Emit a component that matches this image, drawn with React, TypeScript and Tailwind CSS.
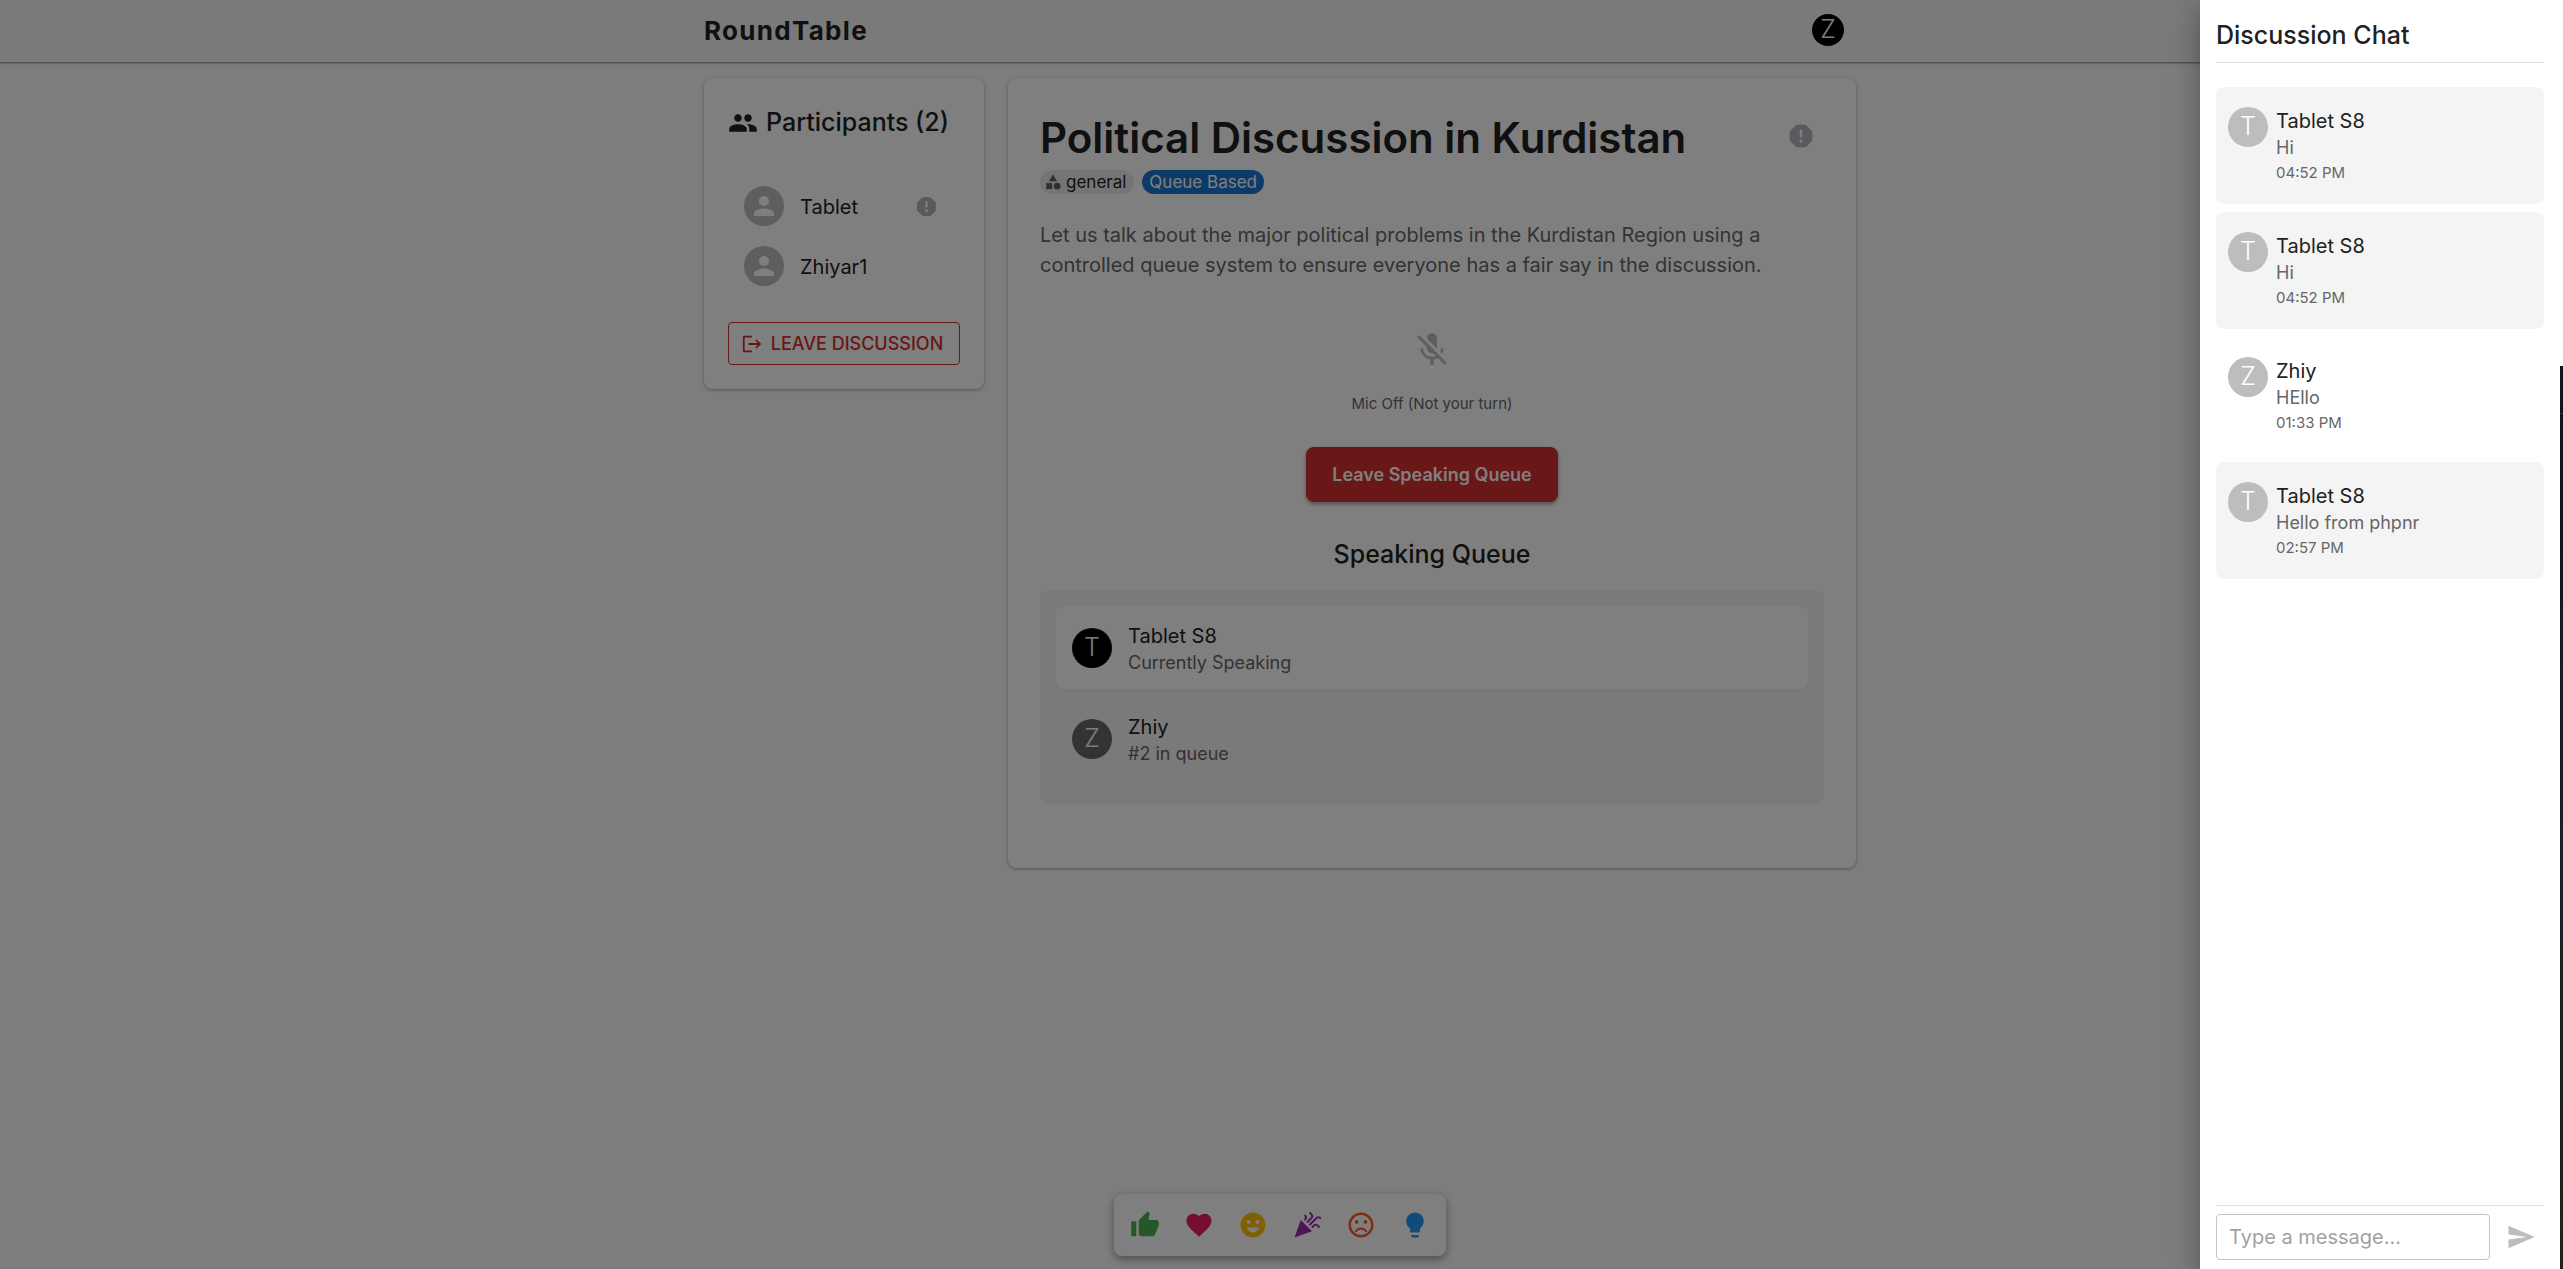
import type { ReactNode } from 'react';
import type { IconType } from 'react-icons';
import {
  MdCategory,
  MdCelebration,
  MdEmojiEmotions,
  MdFavorite,
  MdLightbulb,
  MdLogout,
  MdMicOff,
  MdPeople,
  MdPerson,
  MdReport,
  MdSend,
  MdSentimentVeryDissatisfied,
  MdThumbUp,
} from 'react-icons/md';

interface Message {
  id: number;
  name: string;
  text: string;
  time: string;
  own?: boolean;
}

const MESSAGES: Message[] = [
  { id: 1, name: 'Tablet S8', text: 'Hi', time: '04:52 PM' },
  { id: 2, name: 'Tablet S8', text: 'Hi', time: '04:52 PM' },
  { id: 3, name: 'Zhiy', text: 'HEllo', time: '01:33 PM', own: true },
  { id: 4, name: 'Tablet S8', text: 'Hello from phpnr', time: '02:57 PM' },
];

const PARTICIPANTS = [
  { name: 'Tablet', canReport: true },
  { name: 'Zhiyar1', canReport: false },
];

const QUEUE = [
  { name: 'Tablet S8', status: 'Currently Speaking', active: true },
  { name: 'Zhiy', status: '#2 in queue', active: false },
];

const REACTIONS: { label: string; icon: IconType; color: string }[] = [
  { label: 'Like', icon: MdThumbUp, color: 'text-[#4caf50]' },
  { label: 'Love', icon: MdFavorite, color: 'text-[#e91e63]' },
  { label: 'Smile', icon: MdEmojiEmotions, color: 'text-[#ffc107]' },
  { label: 'Celebrate', icon: MdCelebration, color: 'text-[#9c27b0]' },
  { label: 'Disagree', icon: MdSentimentVeryDissatisfied, color: 'text-[#ff5722]' },
  { label: 'Idea', icon: MdLightbulb, color: 'text-[#2196f3]' },
];

function Avatar({ className, children }: { className: string; children: ReactNode }) {
  return (
    <div className={`flex shrink-0 items-center justify-center rounded-full ${className}`}>{children}</div>
  );
}

function Header() {
  return (
    <header className="relative bg-[#f5f5f5] shadow-[0_1px_2px_rgba(0,0,0,0.5)]">
      <div className="mx-auto flex h-[62px] max-w-[1152px] items-center justify-between pr-3">
        <a href="#" className="text-[26px] leading-[30px] font-bold tracking-wider text-[#212121]">
          RoundTable
        </a>
        <button type="button" aria-label="Account">
          <Avatar className="mb-0.5 size-8 bg-black text-[25px] font-light text-[#fafafa]">Z</Avatar>
        </button>
      </div>
    </header>
  );
}

function Participants() {
  return (
    <aside className="w-[280px] shrink-0 rounded-lg bg-white p-6 shadow-[0_1px_3px_rgba(0,0,0,0.35)]">
      <h2 className="flex h-[42px] items-center gap-2 text-[25px] font-medium text-[#212121]">
        <MdPeople className="size-[30px] shrink-0" />
        Participants (2)
      </h2>
      <ul className="mt-8 px-4">
        {PARTICIPANTS.map(p => (
          <li key={p.name} className="flex h-[60px] items-center">
            <Avatar className="size-10 bg-[#bdbdbd] text-white">
              <MdPerson className="size-[30px]" />
            </Avatar>
            <span className="ml-4 pt-0.5 text-xl text-[#212121]">{p.name}</span>
            {p.canReport && (
              <button type="button" aria-label={`Report ${p.name}`} className="mr-[5px] ml-auto text-[#b4b4bc]">
                <MdReport className="size-[25px]" />
              </button>
            )}
          </li>
        ))}
      </ul>
      <button
        type="button"
        className="mt-[26px] flex h-[43px] w-full items-center justify-center gap-2 rounded border border-[#d32f2f] pr-1 text-lg font-medium text-[#d32f2f]"
      >
        <MdLogout className="size-[22px]" />
        LEAVE DISCUSSION
      </button>
    </aside>
  );
}

function SpeakingQueue() {
  return (
    <section>
      <h2 className="mt-[34px] text-center text-[25px] leading-[36px] font-medium text-[#212121]">Speaking Queue</h2>
      <ul className="mt-[18px] space-y-2 rounded-lg bg-[#f5f5f5] px-4 pt-4 pb-6">
        {QUEUE.map(q => (
          <li
            key={q.name}
            className={`flex h-[83px] items-center rounded-lg px-4 ${
              q.active ? 'bg-white shadow-[0_2px_4px_rgba(0,0,0,0.05)]' : ''
            }`}
          >
            <Avatar
              className={`size-10 text-[25px] font-light text-[#fafafa] ${q.active ? 'bg-black' : 'bg-[#666666]'}`}
            >
              {q.name[0]}
            </Avatar>
            <div className="ml-4 pt-0.5">
              <p className="text-xl leading-[28px] text-[#212121]">{q.name}</p>
              <p className="text-lg leading-[25px] text-[#666666]">{q.status}</p>
            </div>
          </li>
        ))}
      </ul>
    </section>
  );
}

function Discussion() {
  return (
    <main className="min-w-0 flex-1 rounded-lg bg-white px-8 pt-8 pb-16 shadow-[0_1px_3px_rgba(0,0,0,0.35)]">
      <div className="flex items-center justify-between pr-2">
        <h1 className="text-[42px] leading-[56px] font-semibold text-[#212121]">
          Political Discussion in Kurdistan
        </h1>
        <button type="button" aria-label="Report discussion" className="mb-1 text-[#b4b4bc]">
          <MdReport className="size-[30px]" />
        </button>
      </div>
      <div className="mt-1 flex gap-2 text-[17px] leading-6">
        <span className="flex h-6 items-center gap-1 rounded-full bg-[#ebebeb] pr-2 pl-1 text-[#212121]">
          <MdCategory className="size-[18px] text-[#616161]" />
          general
        </span>
        <span className="flex h-6 items-center rounded-full bg-[#1976d2] px-[7px] text-white">Queue Based</span>
      </div>
      <p className="mt-[26px] max-w-[760px] text-xl leading-[30px] text-[#666666]">
        Let us talk about the major political problems in the Kurdistan Region using a controlled queue system to
        ensure everyone has a fair say in the discussion.
      </p>
      <div className="mt-[50px] flex flex-col items-center">
        <button type="button" aria-label="Microphone" disabled className="text-[#bdbdbd]">
          <MdMicOff className="size-10" />
        </button>
        <p className="mt-[22px] text-[15px] leading-6 text-[#666666]">Mic Off (Not your turn)</p>
        <button
          type="button"
          className="mt-[31px] h-[55px] rounded-lg bg-[#d32f2f] px-[26px] text-lg font-semibold text-white shadow-[0_2px_4px_rgba(0,0,0,0.4)]"
        >
          Leave Speaking Queue
        </button>
      </div>
      <SpeakingQueue />
    </main>
  );
}

function ReactionBar() {
  return (
    <div className="absolute bottom-[13px] left-1/2 flex -translate-x-1/2 gap-2 rounded-lg bg-white p-2 shadow-[0_3px_8px_rgba(0,0,0,0.4)]">
      {REACTIONS.map(({ label, icon: Icon, color }) => (
        <button
          key={label}
          type="button"
          aria-label={label}
          className={`flex size-[46px] items-center justify-center ${color}`}
        >
          <Icon className="size-[30px]" />
        </button>
      ))}
    </div>
  );
}

function ChatDrawer() {
  return (
    <aside className="absolute inset-y-0 right-0 flex w-[360px] flex-col bg-white px-4 pb-[9px] shadow-[0_8px_10px_-5px_rgba(0,0,0,0.2),0_16px_24px_2px_rgba(0,0,0,0.14),0_6px_30px_5px_rgba(0,0,0,0.12)]">
      <h2 className="flex h-[63px] items-center border-b border-[#e0e0e0] pt-2 text-[25px] leading-[38px] font-medium text-[#212121]">
        Discussion Chat
      </h2>
      <ul className="mt-6 flex-1 space-y-2">
        {MESSAGES.map(m => (
          <li
            key={m.id}
            className={`flex h-[117px] items-start rounded-lg px-3 pt-5 ${m.own ? '' : 'bg-[#f4f4f4]'}`}
          >
            <Avatar className="size-10 bg-[#bdbdbd] text-[25px] font-light text-white">{m.name[0]}</Avatar>
            <div className="ml-2">
              <p className="text-xl leading-[28px] text-[#212121]">{m.name}</p>
              <p className="text-lg leading-[25px] text-[#666666]">{m.text}</p>
              <p className="text-[15px] leading-[25px] text-[#666666]">{m.time}</p>
            </div>
          </li>
        ))}
      </ul>
      <form className="flex items-center border-t border-[#e0e0e0] pt-2">
        <input
          type="text"
          aria-label="Message"
          placeholder="Type a message..."
          className="h-[46px] min-w-0 flex-1 rounded border border-[#c4c4c4] px-3 text-xl text-[#212121] placeholder:text-[#a2a2a2]"
        />
        <button
          type="button"
          aria-label="Send"
          className="ml-2 flex size-[46px] items-center justify-center text-[#bdbdbd]"
        >
          <MdSend className="size-[30px]" />
        </button>
      </form>
    </aside>
  );
}

export default function App() {
  return (
    <div className="flex h-screen bg-white font-['Inter','Liberation_Sans',sans-serif]">
      <div className="relative flex-1 overflow-hidden bg-[#fafafa]">
        <Header />
        <div className="mx-auto mt-4 flex max-w-[1152px] items-start gap-6">
          <Participants />
          <Discussion />
        </div>
        <ReactionBar />
        <div className="absolute inset-0 bg-black/50" />
        <ChatDrawer />
      </div>
      <div className="flex w-[3px] flex-col pt-[366px]">
        <div className="h-[47px] bg-[#14121b]" />
        <div className="h-px bg-[#6b1f3a]" />
        <div className="flex-1 bg-linear-to-b from-[#14121b] via-[#1d1f25] to-[#261f1c]" />
      </div>
    </div>
  );
}
